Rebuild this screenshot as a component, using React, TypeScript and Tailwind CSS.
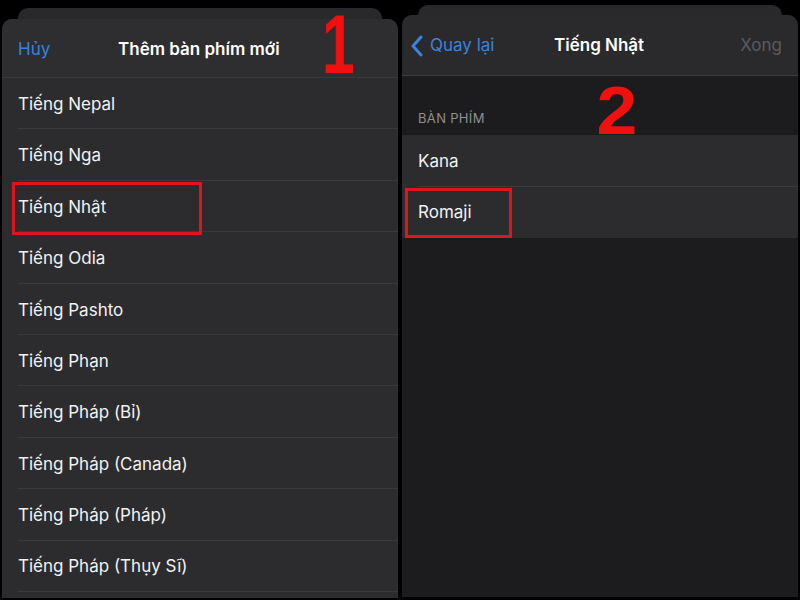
import React from "react";

const LANGS = [
  "Tiếng Nepal",
  "Tiếng Nga",
  "Tiếng Nhật",
  "Tiếng Odia",
  "Tiếng Pashto",
  "Tiếng Phạn",
  "Tiếng Pháp (Bỉ)",
  "Tiếng Pháp (Canada)",
  "Tiếng Pháp (Pháp)",
  "Tiếng Pháp (Thụy Sĩ)",
];

const font = { fontFamily: "Inter, 'Noto Sans', sans-serif" };
const digitFont = { fontFamily: "'Liberation Sans', Arial, sans-serif" };

export default function App() {
  return (
    <div
      className="w-[800px] h-[600px] bg-black flex gap-[4px] pl-[2px] overflow-hidden relative"
      style={font}
    >
      {/* panel 1 */}
      <div className="w-[396px] flex flex-col">
        <div className="mt-[8px] mx-[16px] h-[11px] rounded-t-[10px] bg-[#29292b]" />
        <div className="relative flex-1 mb-[2px] rounded-t-[10px] bg-[#2c2c2e] flex flex-col overflow-hidden">
          <div className="h-[59px] flex items-center px-[16px] pt-[3px] border-b border-[#3a3a3c] bg-[#2e2e30]">
            <span className="text-[17px] text-[#3a82dc] w-[100px]">Hủy</span>
            <span className="text-[17px] font-semibold text-white">
              Thêm bàn phím mới
            </span>
          </div>
          {LANGS.map((l, i) => (
            <div key={l} className="h-[51.4px] flex items-center pl-[16px]">
              <div className="relative h-full flex-1 flex items-center pt-[3px] border-b border-[#3a3a3c]">
                <span className="text-[17px] text-[#f2f2f2]">{l}</span>
                {i === 2 && (
                  <div className="absolute left-[-6px] top-[1px] w-[190px] h-[53px] border-[3px] border-[#e0141c]" />
                )}
              </div>
            </div>
          ))}
        </div>
      </div>

      {/* panel 2 */}
      <div className="w-[396px] flex flex-col">
        <div className="mt-[5px] mx-[16px] h-[10px] rounded-t-[10px] bg-[#29292b]" />
        <div className="relative flex-1 mb-[3px] rounded-t-[10px] bg-[#1c1c1e] flex flex-col overflow-hidden">
          <div className="h-[61px] flex items-center px-[8px] pt-[2px] border-b border-[#3a3a3c] bg-[#2a2a2c]">
            <div className="flex items-center w-[140px] text-[#3a82dc]">
              <svg width="14" height="22" viewBox="0 0 14 22" fill="none">
                <path
                  d="M11 2 L3 11 L11 20"
                  stroke="#3a82dc"
                  strokeWidth="3"
                  strokeLinecap="round"
                  strokeLinejoin="round"
                />
              </svg>
              <span className="text-[17px] ml-[6px]">Quay lại</span>
            </div>
            <span className="text-[17px] font-semibold text-white ml-[4px]">
              Tiếng Nhật
            </span>
            <span className="ml-auto mr-[8px] text-[17px] text-[#5a5a5e]">
              Xong
            </span>
          </div>
          <div className="pt-[33px] pl-[16px] pb-[6px] text-[13px] text-[#8e8e93] tracking-wide">
            BÀN PHÍM
          </div>
          <div className="bg-[#2c2c2e]">
            <div className="h-[52px] flex items-center pl-[16px]">
              <div className="h-full flex-1 flex items-center pt-[3px] border-b border-[#3a3a3c]">
                <span className="text-[17px] text-[#f2f2f2]">Kana</span>
              </div>
            </div>
            <div className="h-[51px] flex items-center pl-[16px]">
              <div className="relative h-full flex-1 flex items-center pt-[2px]">
                <span className="text-[17px] text-[#f2f2f2]">Romaji</span>
                <div className="absolute left-[-13px] top-[1px] w-[107px] h-[50px] border-[3px] border-[#e0141c]" />
              </div>
            </div>
          </div>
        </div>
      </div>

      {/* step numbers */}
      <span
        className="absolute left-[315px] top-[2px] text-[84px] font-bold text-[#f01010] leading-none scale-x-[0.7]"
        style={digitFont}
      >
        1
      </span>
      <span
        className="absolute left-[598px] top-[76px] text-[68px] font-bold text-[#f01010] leading-none scale-x-[1.08]"
        style={digitFont}
      >
        2
      </span>
    </div>
  );
}
